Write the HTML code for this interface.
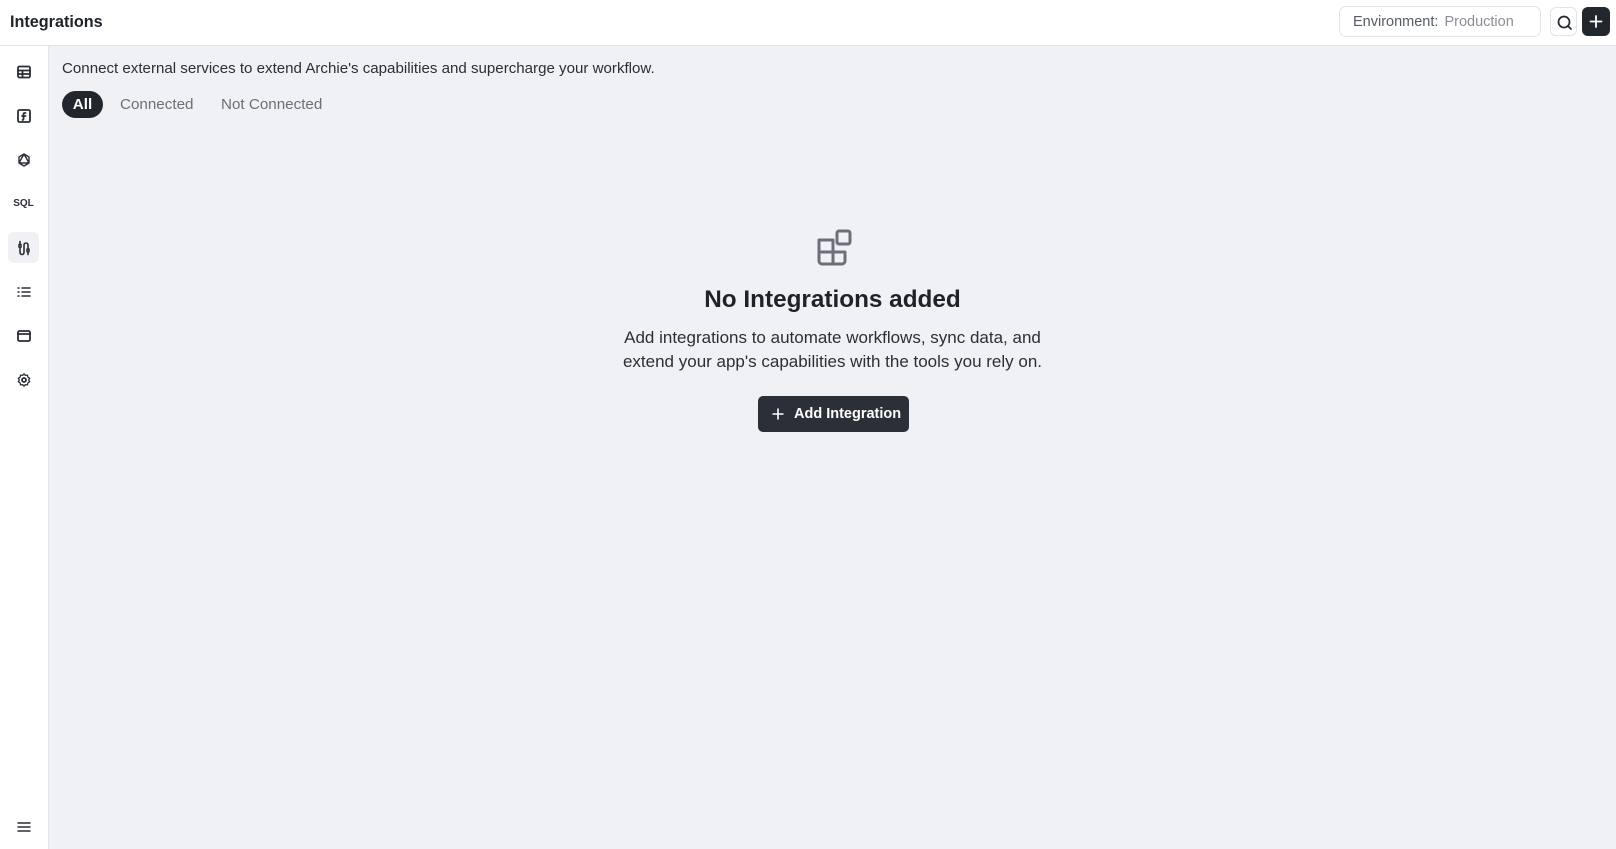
<!DOCTYPE html>
<html><head><meta charset="utf-8"><style>
*{box-sizing:border-box;margin:0;padding:0}
body{width:1616px;height:849px;overflow:hidden;font-family:"Liberation Sans",sans-serif;background:#f0f1f5;color:#1f2329;position:relative}
.hdr{position:absolute;left:0;top:0;width:1616px;height:46px;background:#fff;border-bottom:1px solid #e3e4e8}
.hdr h1{position:absolute;left:10px;top:13px;font-size:16.2px;font-weight:bold;color:#1f2329}
.env{position:absolute;left:1339px;top:6px;width:202px;height:31px;border:1px solid #e3e4e8;border-radius:7px;font-size:14.5px;line-height:31px;padding-left:13px;color:#555b63}
.env span{color:#8a8f97;margin-left:6px}
.sb{position:absolute;left:1550px;top:7px;width:27px;height:29px;border:1px solid #e3e4e8;border-radius:6px;background:#fff}
.pb{position:absolute;left:1582px;top:7px;width:28px;height:29px;border-radius:6px;background:#22272e}
.side{position:absolute;left:0;top:46px;width:49px;height:803px;background:#fff;border-right:1px solid #e3e4e8}
.ic{position:absolute;left:8px;width:31px;height:31px;display:flex;align-items:center;justify-content:center}
.ic svg{width:16px;height:16px;fill:none;stroke:#2a2f36;stroke-width:1.8;stroke-linecap:round;stroke-linejoin:round}
.desc{position:absolute;left:62px;top:60px;font-size:15.1px;color:#2a2f36}
.tab{position:absolute;top:91px;height:27px;line-height:28px;font-size:15.2px;color:#6b7078}
.center{position:absolute;left:49px;width:1567px;text-align:center}
</style></head><body>
<div class="hdr"><h1>Integrations</h1>
<div class="env">Environment:<span>Production</span></div>
<div class="sb"><svg width="27" height="29" viewBox="0 0 27 29"><circle cx="13" cy="14" r="5.5" fill="none" stroke="#22272e" stroke-width="1.7"/><path d="M17 18l3 3" stroke="#22272e" stroke-width="1.7" stroke-linecap="round"/></svg></div>
<div class="pb"><svg width="28" height="29" viewBox="0 0 28 29"><path d="M14 9v11M8.5 14.5h11" stroke="#fff" stroke-width="1.8" stroke-linecap="round"/></svg></div>
</div>
<div class="side">
<div class="ic" style="top:10px"><svg viewBox="0 0 16 16"><rect x="2" y="2.5" width="12" height="11" rx="1.5"/><path d="M2 6.5h12M2 10h12M6.5 6.5v7"/></svg></div>
<div class="ic" style="top:54px"><svg viewBox="0 0 16 16"><rect x="2" y="2" width="12" height="12" rx="1.5"/><path d="M9.5 5h-1a1 1 0 0 0-1 1v5a1 1 0 0 1-1 1M6 8h3.5"/></svg></div>
<div class="ic" style="top:98px"><svg viewBox="0 0 16 16"><path d="M8 2l5 3v6l-5 3-5-3V5zM8 2L3 11h10z" stroke-width="1.4"/></svg></div>
<div class="ic" style="top:142px;font-size:10px;font-weight:bold;color:#2a2f36">SQL</div>
<div class="ic" style="top:186px;background:#f0f1f5;border-radius:6px"><svg viewBox="0 0 16 16"><path d="M4 1.5v3M3 4.5h2v2a1 1 0 0 1-2 0zM4 7.5v5a2 2 0 0 0 4 0V5a2 2 0 0 1 4 0v4M11 9h2v2a1 1 0 0 1-2 0zM12 12v2.5" stroke-width="1.6"/></svg></div>
<div class="ic" style="top:230px"><svg viewBox="0 0 16 16"><path d="M2 4h1M2 8h1M2 12h1M6 4h8M6 8h8M6 12h8" stroke-width="1.5"/></svg></div>
<div class="ic" style="top:274px"><svg viewBox="0 0 16 16"><rect x="2" y="3" width="12" height="10" rx="1.5"/><path d="M2 6h12"/></svg></div>
<div class="ic" style="top:318px"><svg viewBox="0 0 16 16"><circle cx="8" cy="8" r="2"/><path d="M8 1.8l1.4 1.6 2.1-.3.4 2.1 1.8 1.1-1 1.7 1 1.7-1.8 1.1-.4 2.1-2.1-.3L8 14.2l-1.4-1.6-2.1.3-.4-2.1-1.8-1.1 1-1.7-1-1.7 1.8-1.1.4-2.1 2.1.3z" stroke-width="1.3"/></svg></div>
<div class="ic" style="top:765px"><svg viewBox="0 0 16 16"><path d="M2 4h12M2 8h12M2 12h12" stroke-width="1.5"/></svg></div>
</div>
<div class="desc">Connect external services to extend Archie's capabilities and supercharge your workflow.</div>
<div class="tab" style="left:62px;width:41px;background:#22272e;color:#fff;border-radius:14px;text-align:center;font-weight:bold">All</div>
<div class="tab" style="left:120px">Connected</div>
<div class="tab" style="left:221px">Not Connected</div>
<svg style="position:absolute;left:815px;top:228px" width="40" height="40" viewBox="0 0 40 40" fill="none" stroke="#6b7078" stroke-width="3" stroke-linejoin="round"><path d="M4 12h14v24H7a3 3 0 0 1-3-3zM4 24h26M18 24h12v9a3 3 0 0 1-3 3H18"/><rect x="22" y="3" width="13" height="13" rx="2"/></svg>
<div class="center" style="top:286px;font-size:24.3px;font-weight:bold;color:#1f2329">No Integrations added</div>
<div class="center" style="top:326px;font-size:17px;line-height:24px;color:#2a2f36">Add integrations to automate workflows, sync data, and<br>extend your app's capabilities with the tools you rely on.</div>
<div style="position:absolute;left:758px;top:396px;width:151px;height:36px;background:#2b3038;border-radius:5px;color:#fff;font-size:14.5px;font-weight:bold;line-height:37px;padding-left:36px">Add Integration
<svg style="position:absolute;left:14px;top:12px" width="12" height="12" viewBox="0 0 12 12"><path d="M6 0.5v11M0.5 6h11" stroke="#fff" stroke-width="1.6"/></svg></div>
</body></html>
